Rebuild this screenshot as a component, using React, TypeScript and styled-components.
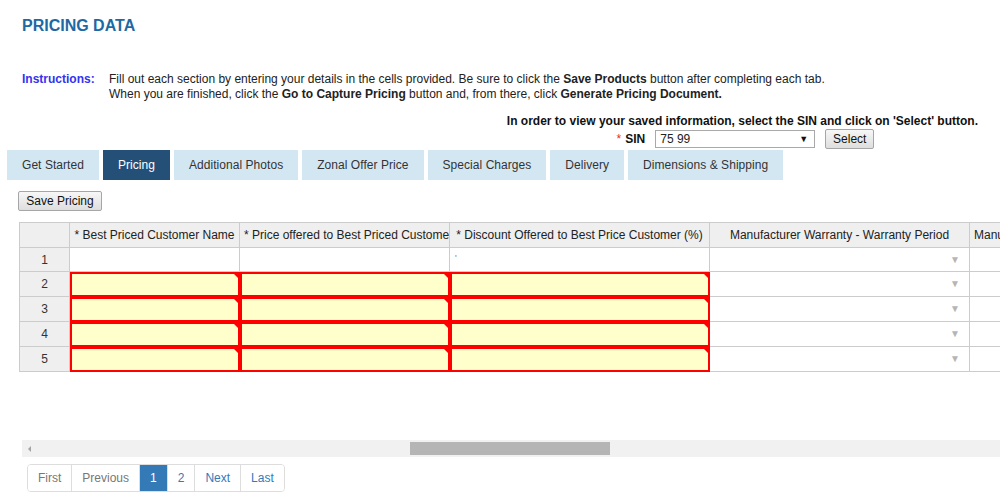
import React from "react";
import styled, { createGlobalStyle } from "styled-components";

const Global = createGlobalStyle`
  html, body { margin: 0; padding: 0; background: #fff; }
  body { font-family: "Liberation Sans", Arial, sans-serif; font-size: 12px; color: #222; }
  * { box-sizing: border-box; }
`;

const Page = styled.div`
  width: 1000px;
  height: 500px;
  overflow: hidden;
  display: flex;
  flex-direction: column;
`;

const Title = styled.h1`
  margin: 16px 0 0 22px;
  font-size: 16px;
  line-height: 20px;
  font-weight: bold;
  color: #1d69a3;
`;

const Instructions = styled.div`
  margin: 36px 0 0 22px;
  display: grid;
  grid-template-columns: 87px auto;
  line-height: 15px;
  color: #222;
`;

const InstrLabel = styled.div`
  font-weight: bold;
  color: #3333ee;
`;

const Notice = styled.div`
  align-self: flex-end;
  margin: 12px 22px 0 0;
  display: flex;
  flex-direction: column;
  align-items: center;
`;

const NoticeText = styled.div`
  font-weight: bold;
  line-height: 15px;
  color: #111;
`;

const SinRow = styled.div`
  display: flex;
  align-items: center;
  height: 19px;
  margin-left: 6px;
`;

const SinLabel = styled.span`
  font-weight: bold;
  color: #111;
  margin-right: 10px;
`;

const Req = styled.span`
  color: #e03030;
  font-weight: normal;
  margin-right: 4px;
`;

const SelectBox = styled.div`
  width: 160px;
  height: 18px;
  border: 1px solid #a9a9a9;
  display: flex;
  align-items: center;
  justify-content: space-between;
  padding: 0 6px 0 4px;
  color: #222;
  background: #fff;
`;

const Caret = styled.span`
  font-size: 9px;
  color: #111;
`;

const Button = styled.button`
  font-family: "Liberation Sans", Arial, sans-serif;
  font-size: 12px;
  color: #111;
  height: 20px;
  padding: 0 7px;
  border: 1px solid #a6a6a6;
  border-radius: 2px;
  background: linear-gradient(#f7f7f7, #dedede);
  line-height: 18px;
`;

const SelectBtn = styled(Button)`
  margin-left: 10px;
  width: 49px;
  padding: 0;
`;

const Tabs = styled.div`
  margin: 2px 0 0 7px;
  display: flex;
  gap: 4px;
`;

const Tab = styled.div<{ $active?: boolean }>`
  height: 30px;
  padding: 0 15px;
  display: flex;
  align-items: center;
  background: ${(p) => (p.$active ? "#245077" : "#d3e7f3")};
  color: ${(p) => (p.$active ? "#fff" : "#333")};
  white-space: nowrap;
  letter-spacing: 0.05px;
`;

const SaveBtn = styled(Button)`
  margin: 11px 0 0 18px;
  align-self: flex-start;
  width: 84px;
  padding: 0;
`;

const TableWrap = styled.div`
  margin: 11px 0 0 19px;
  overflow: hidden;
  width: 981px;
`;

const Grid = styled.div`
  display: grid;
  grid-template-columns: 50px 170px 210px 260px 260px 200px;
  grid-template-rows: 25px 24px 25px 25px 25px 25px;
  width: max-content;
  border-top: 1px solid #cccccc;
  border-left: 1px solid #cccccc;
`;

const Cell = styled.div<{ $head?: boolean; $invalid?: boolean }>`
  position: relative;
  border-right: 1px solid ${(p) => (p.$invalid ? "#ff0000" : "#cccccc")};
  border-bottom: 1px solid ${(p) => (p.$invalid ? "#ff0000" : "#cccccc")};
  background: ${(p) => (p.$head ? "#efefef" : p.$invalid ? "#ffffcc" : "#fff")};
  box-shadow: ${(p) => (p.$invalid ? "inset 2px 2px 0 #ff0000, inset -1px -1px 0 #ff0000" : "none")};
  color: #222;
  white-space: nowrap;
  overflow: hidden;
  text-align: ${(p) => (p.$head ? "center" : "left")};
  padding: 0 4px;
  line-height: 24px;
  ${(p) =>
    p.$invalid
      ? `&::after {
    content: "";
    position: absolute;
    top: 0;
    right: 0;
    border-top: 7px solid #ff0000;
    border-left: 7px solid transparent;
  }`
      : ""}
`;

const RowHead = styled(Cell)`
  text-align: center;
  background: #efefef;
  color: #333;
`;

const Tick = styled.span`
  position: absolute;
  left: 5px;
  top: 6px;
  font-size: 9px;
  line-height: 9px;
  color: #777;
`;

const DropArrow = styled.span`
  position: absolute;
  right: 9px;
  top: 0;
  font-size: 10px;
  color: #b5b5b5;
`;

const ScrollBar = styled.div`
  margin: 68px 0 0 22px;
  height: 17px;
  background: #f1f1f1;
  display: flex;
  align-items: center;
  position: relative;
`;

const ScrollArrow = styled.span`
  margin-left: 6px;
  width: 0;
  height: 0;
  border-top: 3px solid transparent;
  border-bottom: 3px solid transparent;
  border-right: 3px solid #a3a3a3;
`;

const Thumb = styled.div`
  margin-left: 379px;
  width: 200px;
  height: 13px;
  background: #b5b5b5;
`;

const Pager = styled.div`
  margin: 7px 0 0 27px;
  display: flex;
  align-self: flex-start;
  border: 1px solid #dddddd;
  border-radius: 4px;
  overflow: hidden;
`;

const PageItem = styled.div<{ $active?: boolean; $disabled?: boolean }>`
  height: 26px;
  padding: 0 10px;
  display: flex;
  align-items: center;
  font-size: 12px;
  border-left: 1px solid #dddddd;
  &:first-child { border-left: none; }
  background: ${(p) => (p.$active ? "#337ab7" : "#fff")};
  color: ${(p) => (p.$active ? "#fff" : p.$disabled ? "#777" : "#337ab7")};
`;

const headers = [
  "* Best Priced Customer Name",
  "* Price offered to Best Priced Customer",
  "* Discount Offered to Best Price Customer (%)",
  "Manufacturer Warranty - Warranty Period",
  "Manufacturer Warranty - Warranty Terms",
];

export default function App() {
  const rows = [1, 2, 3, 4, 5];
  return (
    <Page>
      <Global />
      <Title>PRICING DATA</Title>
      <Instructions>
        <InstrLabel>Instructions:</InstrLabel>
        <div>
          Fill out each section by entering your details in the cells provided. Be sure to click the{" "}
          <b>Save Products</b> button after completing each tab.
          <br />
          When you are finished, click the <b>Go to Capture Pricing</b> button and, from there, click{" "}
          <b>Generate Pricing Document.</b>
        </div>
      </Instructions>
      <Notice>
        <NoticeText>In order to view your saved information, select the SIN and click on 'Select' button.</NoticeText>
        <SinRow>
          <SinLabel>
            <Req>*</Req>SIN
          </SinLabel>
          <SelectBox>
            <span>75 99</span>
            <Caret>▼</Caret>
          </SelectBox>
          <SelectBtn>Select</SelectBtn>
        </SinRow>
      </Notice>
      <Tabs>
        <Tab>Get Started</Tab>
        <Tab $active>Pricing</Tab>
        <Tab>Additional Photos</Tab>
        <Tab>Zonal Offer Price</Tab>
        <Tab>Special Charges</Tab>
        <Tab>Delivery</Tab>
        <Tab>Dimensions &amp; Shipping</Tab>
      </Tabs>
      <SaveBtn>Save Pricing</SaveBtn>
      <TableWrap>
        <Grid>
          <Cell $head />
          {headers.map((h) => (
            <Cell $head key={h}>
              {h}
            </Cell>
          ))}
          {rows.map((r) => (
            <React.Fragment key={r}>
              <RowHead>{r}</RowHead>
              {[0, 1, 2].map((c) => (
                <Cell key={c} $invalid={r > 1}>
                  {r === 1 && c === 2 ? <Tick>'</Tick> : null}
                </Cell>
              ))}
              <Cell>
                <DropArrow>▼</DropArrow>
              </Cell>
              <Cell />
            </React.Fragment>
          ))}
        </Grid>
      </TableWrap>
      <ScrollBar>
        <ScrollArrow />
        <Thumb />
      </ScrollBar>
      <Pager>
        <PageItem $disabled>First</PageItem>
        <PageItem $disabled>Previous</PageItem>
        <PageItem $active>1</PageItem>
        <PageItem>2</PageItem>
        <PageItem>Next</PageItem>
        <PageItem>Last</PageItem>
      </Pager>
    </Page>
  );
}
